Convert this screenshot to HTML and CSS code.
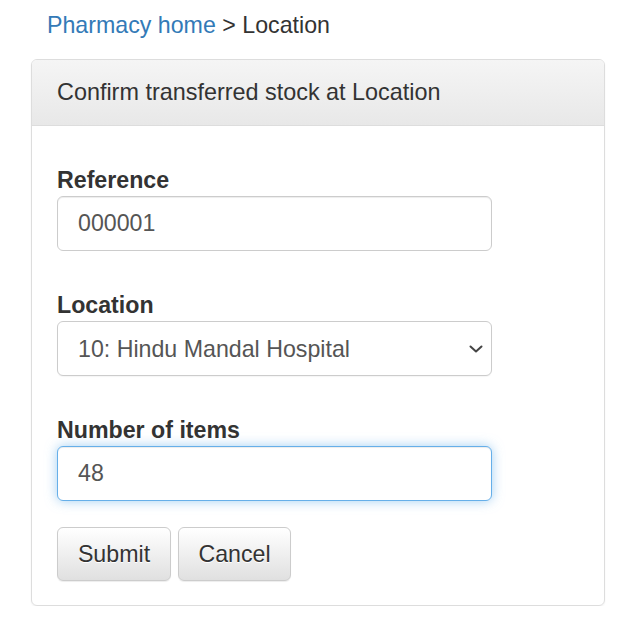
FILE: index.html
```html
<!DOCTYPE html>
<html lang="en">
<head>
<meta charset="utf-8">
<title>Confirm transferred stock</title>
<link rel="stylesheet" href="styles.css">
</head>
<body>
<div class="crumbs"><a href="#" class="crumb-link">Pharmacy home</a> &gt; Location</div>
<div class="panel">
  <div class="panel-heading">Confirm transferred stock at Location</div>
  <form class="panel-body">
    <div class="form-group">
      <label class="label" for="ref">Reference</label>
      <input class="field" id="ref" type="text" value="000001">
    </div>
    <div class="form-group">
      <label class="label" for="loc">Location</label>
      <div class="select-wrap">
        <select class="field select" id="loc">
          <option>10: Hindu Mandal Hospital</option>
        </select>
        <svg class="chevron" width="14" height="8" viewBox="0 0 14 8"><path d="M1.5 1.5 L7 6.5 L12.5 1.5" fill="none" stroke="#444" stroke-width="2" stroke-linecap="round" stroke-linejoin="round"/></svg>
      </div>
    </div>
    <div class="form-group last">
      <label class="label" for="num">Number of items</label>
      <input class="field focused" id="num" type="text" value="48">
    </div>
    <div class="actions">
      <button type="button" class="btn btn-submit">Submit</button>
      <button type="button" class="btn btn-cancel">Cancel</button>
    </div>
  </form>
</div>
</body>
</html>
```
FILE: styles.css
```css
* { box-sizing: border-box; }
html, body { background: #fff; }
body {
  margin: 0;
  font-family: "Liberation Sans", Arial, Helvetica, sans-serif;
  font-size: 23.2px;
  color: #333;
}
.crumbs {
  padding: 9px 0 0 47px;
  line-height: 32px;
  height: 41px;
  margin-bottom: 18px;
}
.crumb-link { color: #337ab7; text-decoration: none; }
.panel {
  margin-left: 31px;
  width: 574px;
  border: 1px solid #ddd;
  border-radius: 6px;
  box-shadow: 0 1px 2px rgba(0,0,0,0.06);
  overflow: hidden;
}
.panel-heading {
  padding: 16px 25px 17px;
  line-height: 32px;
  font-size: 23.4px;
  background: linear-gradient(#f5f5f5, #e8e8e8);
  border-bottom: 1px solid #ddd;
  color: #333;
}
.panel-body {
  margin: 0;
  padding: 41px 25px 24px;
}
.form-group { margin-bottom: 41px; }
.form-group.last { margin-bottom: 26px; }
.label {
  display: block;
  font-weight: bold;
  line-height: 26px;
  margin-bottom: 3px;
  color: #333;
}
.field {
  display: block;
  width: 435px;
  height: 55px;
  padding: 0 20px;
  border: 1px solid #ccc;
  border-radius: 6px;
  font-family: inherit;
  font-size: 23.2px;
  color: #555;
  background: #fff;
  box-shadow: inset 0 1px 1px rgba(0,0,0,0.075);
  outline: none;
}
.select-wrap { position: relative; width: 435px; }
.select {
  -webkit-appearance: none;
  appearance: none;
  box-shadow: 0 1px 1px rgba(0,0,0,0.04);
}
.chevron {
  position: absolute;
  left: 412px;
  top: 24px;
  pointer-events: none;
}
.field.focused {
  border-color: #66afe9;
  box-shadow: inset 0 1px 1px rgba(0,0,0,0.075), 0 0 12px rgba(102,175,233,0.6);
}
.actions { display: flex; gap: 7px; }
.btn {
  height: 54px;
  padding: 0;
  border: 1px solid #ccc;
  border-radius: 6px;
  font-family: inherit;
  font-size: 23.2px;
  color: #333;
  background: linear-gradient(#fff, #e0e0e0);
  text-shadow: 0 1px 0 #fff;
  box-shadow: inset 0 1px 0 rgba(255,255,255,0.15), 0 1px 1px rgba(0,0,0,0.075);
}
.btn-submit { width: 114px; }
.btn-cancel { width: 113px; }
```
